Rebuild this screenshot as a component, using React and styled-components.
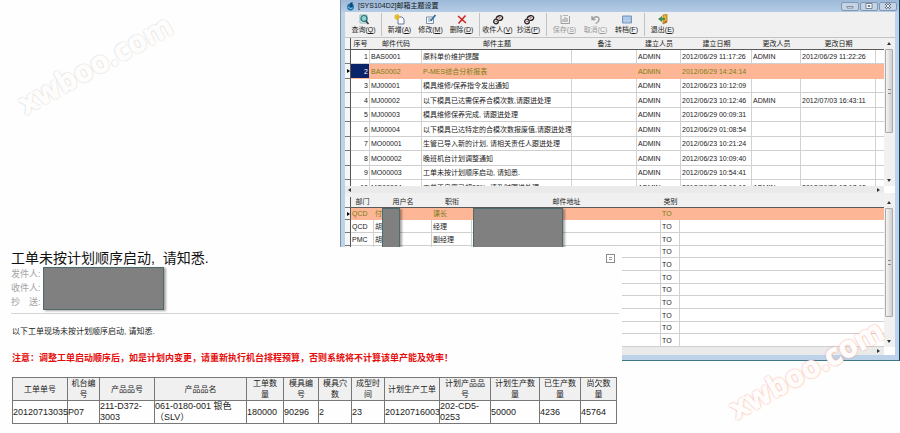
import React from "react";
import styled, { createGlobalStyle, css } from "styled-components";

const GlobalStyle = createGlobalStyle`
  body {
    margin: 0;
    background: #fefefe;
    font-family: "Liberation Sans", "Noto Sans CJK SC", sans-serif;
    color: #222;
  }
`;

const Page = styled.div`
  position: relative;
  display: grid;
  grid-template-columns: 340fr 282fr 278fr;
  grid-template-rows: 247px auto auto;
  overflow: hidden;
`;

const Watermark = styled.div`
  position: absolute;
  top: ${(props) => props.$top};
  left: ${(props) => props.$left};
  z-index: 3;
  font-family: "Open Sans", sans-serif;
  font-size: 30px;
  font-weight: bold;
  line-height: 40px;
  color: #fffdfc;
  -webkit-text-stroke: 1px #fffdfc;
  transform: translate(-50%, -50%) rotate(-29deg);
  pointer-events: none;
  text-shadow: 0 0 2px ${(props) => props.$edge}, 0 0 2px ${(props) => props.$edge};
`;

/* ---------- application window ---------- */

const Window = styled.section`
  grid-column: 2 / 4;
  grid-row: 1 / 3;
  align-self: start;
  min-width: 0;
  box-sizing: border-box;
  border-left: 1px solid #7f919f;
  border-right: 1px solid #0f3f5c;
  border-bottom: 1px solid #3f7688;
  padding: 0 4px 5px;
  background: #bcd3ea;
  font-size: 7px;
`;

const TitleBar = styled.header`
  display: flex;
  align-items: center;
  height: 12px;
  margin: 0 -4px;
  padding: 0 2px 0 6px;
  background: linear-gradient(#9db9d8, #b5cce5);
`;

const Title = styled.h1`
  flex: 1;
  margin: 0 0 0 4px;
  font-size: 7px;
  font-weight: normal;
  line-height: 12px;
  color: #101820;
`;

const WindowButton = styled.button`
  display: flex;
  align-items: center;
  justify-content: center;
  width: 18px;
  height: 9px;
  margin-left: 1px;
  padding: 0;
  border: 1px solid #8397b3;
  border-radius: 2px;
  background: #c3d4e7;
`;

const Toolbar = styled.div`
  display: flex;
  height: 26px;
  box-sizing: border-box;
  padding: 1px 3px;
  border-bottom: 1px solid #c4c4c4;
  background: #f0f0f0;
`;

const ToolButton = styled.button`
  display: flex;
  flex-direction: column;
  align-items: center;
  width: 31px;
  padding: 0;
  border: 0;
  background: none;
  font: inherit;
  line-height: 10px;
  white-space: nowrap;
  color: #1c1c1c;

  &:disabled {
    color: #9a9a9a;
  }

  svg {
    flex: none;
    margin-top: 1px;
  }
`;

const Separator = styled.div`
  width: 1px;
  margin: 0 2px;
  background: #c2c2c2;
`;

const Pane = styled.div`
  display: grid;
  grid-template-columns: minmax(0, 1fr) 11px;
  grid-template-rows: ${(props) => props.$body} ${(props) => props.$bar};
  background: #fff;
  border-bottom: ${(props) => props.$gap || "0"} solid #f0f0f0;
`;

const TableBox = styled.div`
  position: relative;
  overflow: hidden;
`;

const DataTable = styled.table`
  width: 100%;
  table-layout: fixed;
  border-collapse: separate;
  border-spacing: 0;

  th,
  td {
    padding: 0 1px;
    overflow: hidden;
    white-space: nowrap;
    line-height: 11px;
  }

  th {
    height: ${(props) => props.$head};
    box-sizing: border-box;
    padding: 0;
    font-weight: normal;
    line-height: 10px;
    background: #f0f0f0;
    border-bottom: 1px solid #5a5a5a;
  }

  td {
    border-right: 1px solid #d2d2d2;
    border-bottom: 1px solid #cfcfcf;
  }

  td:last-child {
    border-right: 0;
  }

  th:first-child,
  td:first-child {
    padding: 0;
    border-right: 1px solid #555;
    border-bottom: 1px solid #777;
    background: #f6f6f6;
  }
`;

const ThemeRow = styled.tr`
  height: ${(props) => (props.$tall ? "15px" : "14px")};
  ${(props) => props.$selected && selected}
`;

const UserRow = styled.tr`
  height: 13px;

  &:nth-child(3n + 1) {
    height: 12px;
  }
  ${(props) => props.$selected && selected}
`;

const selected = css`
  td:not(:first-child) {
    color: #7b7c14;
    background: #fdb797;
    border-color: #fdb797;
  }
`;

const NumberCell = styled.td`
  text-align: right;

  ${ThemeRow} &&& {
    ${(props) => props.$active && "background: #0a246a; color: #fff;"}
  }
`;

const Marker = styled.span`
  display: block;
  width: 0;
  margin-left: 2px;
  border: 2px solid transparent;
  border-left: 3px solid #000;
  border-right: 0;
`;

const Mask = styled.div`
  position: absolute;
  top: ${(props) => props.$top};
  left: ${(props) => props.$left};
  width: ${(props) => props.$width};
  height: ${(props) => props.$height};
  box-sizing: border-box;
  border: 1px solid #4d6b6b;
  background: #808080;
  box-shadow: 2px 1px 2px rgba(0, 0, 0, 0.35);
`;

const VerticalBar = styled.div`
  display: flex;
  flex-direction: column;
  justify-content: space-between;
  align-items: center;
  padding: 4px 1px 3px 0;
  background: #f1f1f1;
`;

const Thumb = styled.div`
  display: flex;
  align-items: center;
  justify-content: center;
  width: 8px;
  height: ${(props) => props.$size};
  margin: 3px 0 auto;
  box-sizing: border-box;
  border: 1px solid #ababab;
  border-radius: 1px;
  background: linear-gradient(90deg, #f4f4f4, #d0d0d0);
`;

const Grip = styled.div`
  width: 3px;
  height: 3px;
  border: 1px solid #8a8a8a;
  border-width: 1px 0;
`;

const HorizontalBar = styled.div`
  display: flex;
  justify-content: space-between;
  align-items: center;
  padding: 0 3px;
  background: #eaeaea;
`;

const arrows = {
  up: "0,3 4,3 2,0",
  down: "0,0 4,0 2,3",
  left: "3,0 3,4 0,2",
  right: "0,0 0,4 3,2",
};

const Arrow = ({ to }) => (
  <svg width="4" height="4" viewBox="0 0 4 4">
    <polygon points={arrows[to]} fill="#333" />
  </svg>
);

const Scroller = ({ size }) => (
  <VerticalBar>
    <Arrow to="up" />
    <Thumb $size={size}>
      <Grip />
    </Thumb>
    <Arrow to="down" />
  </VerticalBar>
);

/* ---------- toolbar icons ---------- */

const Icon = ({ children }) => (
  <svg width="12" height="11" viewBox="0 0 12 11" fill="none">
    {children}
  </svg>
);

const icons = {
  search: (
    <Icon>
      <path d="M2 1H9V9H2Z" fill="#e8f4f4" stroke="#8fb4b4" />
      <circle cx="6" cy="4.5" r="3" fill="#8cd5d0" stroke="#2c6c78" strokeWidth="1.2" />
      <path d="M8 7L10.5 10" stroke="#345" strokeWidth="1.6" />
    </Icon>
  ),
  add: (
    <Icon>
      <path d="M4 3H8L10 5V10H4Z" fill="#fff" stroke="#667799" />
      <path d="M3 0V6M0 3H6M1 1L5 5M5 1L1 5" stroke="#e8b818" strokeWidth="1.1" />
    </Icon>
  ),
  edit: (
    <Icon>
      <path d="M1.5 3H8.5V9.5H1.5Z" fill="#fff" stroke="#7b8fa5" />
      <path d="M3 5H6M3 7H5" stroke="#7b8fa5" />
      <path d="M5.5 7L10.5 1" stroke="#2f6f9f" strokeWidth="1.8" />
    </Icon>
  ),
  remove: (
    <Icon>
      <path d="M2 2L10 9M9.5 1.5L2.5 9.5" stroke="#cf2020" strokeWidth="1.5" />
    </Icon>
  ),
  mail: (
    <Icon>
      <circle cx="4" cy="7.5" r="2.3" stroke="#222" strokeWidth="1.3" />
      <circle cx="4.2" cy="7.5" r="0.8" fill="#b44" />
      <path d="M4 4.5C5 1.2 9.5 0.8 10.6 3.2C11 5 9 6.8 7 6.2" stroke="#222" strokeWidth="1.4" />
      <path d="M6.5 4.2L8.5 3.5" stroke="#b33" strokeWidth="1.2" />
    </Icon>
  ),
  save: (
    <Icon>
      <path d="M2 1V9.5H10.5V2" stroke="#a0a0a0" />
      <path d="M4 8V5M6 8V3M8 8V4" stroke="#a0a0a0" strokeWidth="1.2" />
      <path d="M4 1.5H9" stroke="#b4b4b4" />
    </Icon>
  ),
  undo: (
    <Icon>
      <path d="M2 2V5.5H5.5M2.5 5C5 1.5 9.5 2.5 9 5.5C8.8 7.5 7 9 5.5 9.5" stroke="#999" strokeWidth="1.3" />
    </Icon>
  ),
  convert: (
    <Icon>
      <path d="M1.5 2H10.5V9H1.5Z" fill="#9fc0e4" stroke="#7797bd" />
      <path d="M2 4H10M4 4V9M7 4V9M2 6.5H10" stroke="#c4d8ee" strokeWidth="0.7" />
    </Icon>
  ),
  exit: (
    <Icon>
      <path d="M6 1L10 0.5V8L6 10Z" fill="#f0b52c" stroke="#9a6912" strokeWidth="0.7" />
      <path d="M5 2L1 5L5 8V6H8V4H5Z" fill="#469052" />
      <circle cx="8.5" cy="8" r="1.3" fill="#d0672a" />
    </Icon>
  ),
};

const tools = [
  { icon: "search", label: "查询", hotkey: "Q" },
  null,
  { icon: "add", label: "新增", hotkey: "A" },
  { icon: "edit", label: "修改", hotkey: "M" },
  { icon: "remove", label: "删除", hotkey: "D" },
  null,
  { icon: "mail", label: "收件人", hotkey: "V" },
  { icon: "mail", label: "抄送", hotkey: "P" },
  null,
  { icon: "save", label: "保存", hotkey: "S", disabled: true },
  { icon: "undo", label: "取消", hotkey: "C", disabled: true },
  { icon: "convert", label: "转档", hotkey: "F" },
  null,
  { icon: "exit", label: "退出", hotkey: "E" },
];

const themes = [
  ["BAS0001", "原料单价维护提醒", "2012/06/29 11:17:26", "ADMIN", "2012/06/29 11:22:26"],
  ["BAS0002", "P-MES综合分析报表", "2012/06/29 14:24:14"],
  ["MJ00001", "模具维修/保养指令发出通知", "2012/06/23 10:12:09"],
  ["MJ00002", "以下模具已达需保养合模次数,请跟进处理", "2012/06/23 10:12:46", "ADMIN", "2012/07/03 16:43:11"],
  ["MJ00003", "模具维修保养完成, 请跟进处理", "2012/06/29 00:09:31"],
  ["MJ00004", "以下模具已达特定的合模次数报废值,请跟进处理", "2012/06/29 01:08:54"],
  ["MO00001", "生管已导入新的计划, 请相关责任人跟进处理", "2012/06/23 10:21:24"],
  ["MO00002", "晚班机台计划调整通知", "2012/06/23 10:09:40"],
  ["MO00003", "工单未按计划顺序启动, 请知悉.", "2012/06/29 10:54:41"],
  ["MO00004", "工单不良率已超20%, 请及时跟进处理", "2012/06/29 17:10:10", "ADMIN", "2012/06/29 17:17:15"],
];

const users = [
  ["QCD", "付", "课长"],
  ["QCD", "胡", "经理"],
  ["PMC", "胡", "副经理"],
  ...Array.from({ length: 8 }, () => ["", "", ""]),
];

const ThemeTable = () => (
  <DataTable $head="12px">
    <colgroup>
      <col width="6" />
      <col width="19" />
      <col width="52" />
      <col width="150" />
      <col />
      <col width="44" />
      <col width="71" />
      <col width="49" />
      <col width="75" />
      <col width="8" />
    </colgroup>
    <thead>
      <tr>
        <th />
        <th>序号</th>
        <th>邮件代码</th>
        <th>邮件主题</th>
        <th>备注</th>
        <th>建立人员</th>
        <th>建立日期</th>
        <th>更改人员</th>
        <th>更改日期</th>
        <th />
      </tr>
    </thead>
    <tbody>
      {themes.map(([code, subject, created, editor, edited], i) => (
        <ThemeRow key={code} $tall={i % 2 === 1} $selected={i === 1}>
          <td>{i === 1 && <Marker />}</td>
          <NumberCell $active={i === 1}>{i + 1}</NumberCell>
          <td>{code}</td>
          <td>{subject}</td>
          <td />
          <td>ADMIN</td>
          <td>{created}</td>
          <td>{editor}</td>
          <td>{edited}</td>
          <td />
        </ThemeRow>
      ))}
    </tbody>
  </DataTable>
);

const UserTable = () => (
  <DataTable $head="11px">
    <colgroup>
      <col width="6" />
      <col width="23" />
      <col width="58" />
      <col width="40" />
      <col width="189" />
      <col width="19" />
      <col />
    </colgroup>
    <thead>
      <tr>
        <th />
        <th>部门</th>
        <th>用户名</th>
        <th>职衔</th>
        <th>邮件地址</th>
        <th>类别</th>
        <th />
      </tr>
    </thead>
    <tbody>
      {users.map(([dept, name, post], i) => (
        <UserRow key={i} $selected={i === 0}>
          <td>{i === 0 && <Marker />}</td>
          <td>{dept}</td>
          <td>{name}</td>
          <td>{post}</td>
          <td />
          <td>TO</td>
          <td />
        </UserRow>
      ))}
    </tbody>
  </DataTable>
);

const SettingsWindow = () => (
  <Window>
    <TitleBar>
      <svg width="7" height="9" viewBox="0 0 7 9">
        <circle cx="3.5" cy="5" r="3.4" fill="#1d6fa5" />
        <path d="M3 1L5.5 0V4.5L3.5 5.5Z" fill="#0e4574" />
        <path d="M1 5Q3 7.5 5.5 6" stroke="#8fd0e6" fill="none" />
      </svg>
      <Title>[SYS104D2]邮箱主题设置</Title>
      <WindowButton aria-label="最小化">
        <svg width="8" height="5" viewBox="0 0 8 5">
          <path d="M1 2.5H7V4H1Z" fill="#fff" stroke="#5b6b80" strokeWidth="0.7" />
        </svg>
      </WindowButton>
      <WindowButton aria-label="还原">
        <svg width="8" height="6" viewBox="0 0 8 6">
          <path d="M1 0.5H7V5.5H1ZM3 2.5H5V3.5H3Z" fill="#fff" stroke="#5b6b80" strokeWidth="0.8" />
        </svg>
      </WindowButton>
      <WindowButton aria-label="关闭">
        <svg width="8" height="6" viewBox="0 0 8 6">
          <path d="M1.5 0.5L6.5 5.5M6.5 0.5L1.5 5.5" stroke="#5b6b80" strokeWidth="2.2" />
          <path d="M1.5 0.5L6.5 5.5M6.5 0.5L1.5 5.5" stroke="#fff" strokeWidth="0.9" />
        </svg>
      </WindowButton>
    </TitleBar>
    <Toolbar>
      {tools.map((tool, i) =>
        tool ? (
          <ToolButton key={i} disabled={tool.disabled}>
            {icons[tool.icon]}
            <span>
              {tool.label}(<u>{tool.hotkey}</u>)
            </span>
          </ToolButton>
        ) : (
          <Separator key={i} />
        )
      )}
    </Toolbar>
    <Pane $body="148px" $bar="7px" $gap="4px">
      <TableBox>
        <ThemeTable />
      </TableBox>
      <Scroller size="84px" />
      <HorizontalBar>
        <Arrow to="left" />
        <Arrow to="right" />
      </HorizontalBar>
    </Pane>
    <Pane $body="150px" $bar="8px">
      <TableBox>
        <UserTable />
        <Mask $top="11px" $left="37px" $width="18px" $height="42px" />
        <Mask $top="11px" $left="128px" $width="90px" $height="42px" />
      </TableBox>
      <Scroller size="109px" />
      <HorizontalBar>
        <Arrow to="left" />
        <Arrow to="right" />
      </HorizontalBar>
    </Pane>
  </Window>
);

/* ---------- mail ---------- */

const Mail = styled.article`
  grid-column: 1 / 3;
  grid-row: 2 / 4;
  z-index: 1;
  padding: 2px 3px 6px 11px;
  background: #fefefe;
`;

const MailHead = styled.div`
  display: flex;
  justify-content: space-between;
  align-items: center;
  padding-right: 4px;
`;

const Subject = styled.h2`
  margin: 0;
  font-size: 14px;
  font-weight: normal;
  line-height: 18px;
  color: #111;
`;

const NoteButton = styled.button`
  width: 9px;
  height: 9px;
  padding: 0;
  border: 1px solid #8c8c8c;
  background: #fff;

  svg {
    display: block;
  }
`;

const Addresses = styled.div`
  position: relative;
  padding-bottom: 4px;
  border-bottom: 1px solid #d4d4d4;
  font-size: 9px;
  line-height: 14px;
  color: #a3a3a3;
`;

const Paragraph = styled.p`
  margin: 12px 1px 0;
  font-size: 8px;
  line-height: 12px;
`;

const Warning = styled.p`
  margin: 13px 1px 0;
  font-size: 9px;
  font-weight: bold;
  line-height: 14px;
  color: #e60c0c;
`;

const OrderTable = styled.table`
  width: calc(100% - 3px);
  margin: 12px 1px 0;
  table-layout: fixed;
  border-collapse: collapse;
  font-size: 9px;
  line-height: 11px;

  th,
  td {
    padding: 0;
    border: 1px solid #777;
    text-align: left;
  }

  th {
    padding: 0 3px;
    font-size: 8px;
    font-weight: normal;
    text-align: center;
    background: #f0f0f0;
  }
`;

const orderColumns = [
  { name: "工单单号", value: "20120713035", width: 55 },
  { name: "机台编号", value: "P07", width: 32 },
  { name: "产品品号", value: "211-D372-3003", width: 55 },
  { name: "产品品名", value: "061-0180-001 银色（SLV）" },
  { name: "工单数量", value: "180000", width: 37 },
  { name: "模具编号", value: "90296", width: 35 },
  { name: "模具穴数", value: "2", width: 33 },
  { name: "成型时间", value: "23", width: 33 },
  { name: "计划生产工单", value: "20120716003", width: 55 },
  { name: "计划产品品号", value: "202-CD5-0253", width: 51 },
  { name: "计划生产数量", value: "50000", width: 49 },
  { name: "已生产数量", value: "4236", width: 41 },
  { name: "尚欠数量", value: "45764", width: 36 },
];

const MailPanel = () => (
  <Mail>
    <MailHead>
      <Subject>工单未按计划顺序启动,&nbsp; 请知悉.</Subject>
      <NoteButton aria-label="展开">
        <svg width="7" height="7" viewBox="0 0 7 7">
          <path d="M2 2.5H5M2 4.5H5" stroke="#999" />
        </svg>
      </NoteButton>
    </MailHead>
    <Addresses>
      <div>发件人:</div>
      <div>收件人:</div>
      <div>抄　送:</div>
      <Mask $top="0" $left="32px" $width="121px" $height="43px" />
    </Addresses>
    <Paragraph>以下工单现场未按计划顺序启动, 请知悉.</Paragraph>
    <Warning>
      注意：调整工单启动顺序后，如是计划内变更，请重新执行机台排程预算，否则系统将不计算该单产能及效率！
    </Warning>
    <OrderTable>
      <colgroup>
        {orderColumns.map((column) => (
          <col key={column.name} width={column.width} />
        ))}
      </colgroup>
      <thead>
        <tr>
          {orderColumns.map((column) => (
            <th key={column.name}>{column.name}</th>
          ))}
        </tr>
      </thead>
      <tbody>
        <tr>
          {orderColumns.map((column) => (
            <td key={column.name}>{column.value}</td>
          ))}
        </tr>
      </tbody>
    </OrderTable>
  </Mail>
);

const App = () => (
  <Page>
    <GlobalStyle />
    <SettingsWindow />
    <MailPanel />
    <Watermark $top="64px" $left="95px" $edge="#c4c4c4">
      xwboo.com
    </Watermark>
    <Watermark $top="369px" $left="calc(100% - 94px)" $edge="#f28c78">
      xwboo.com
    </Watermark>
  </Page>
);

export default App;
